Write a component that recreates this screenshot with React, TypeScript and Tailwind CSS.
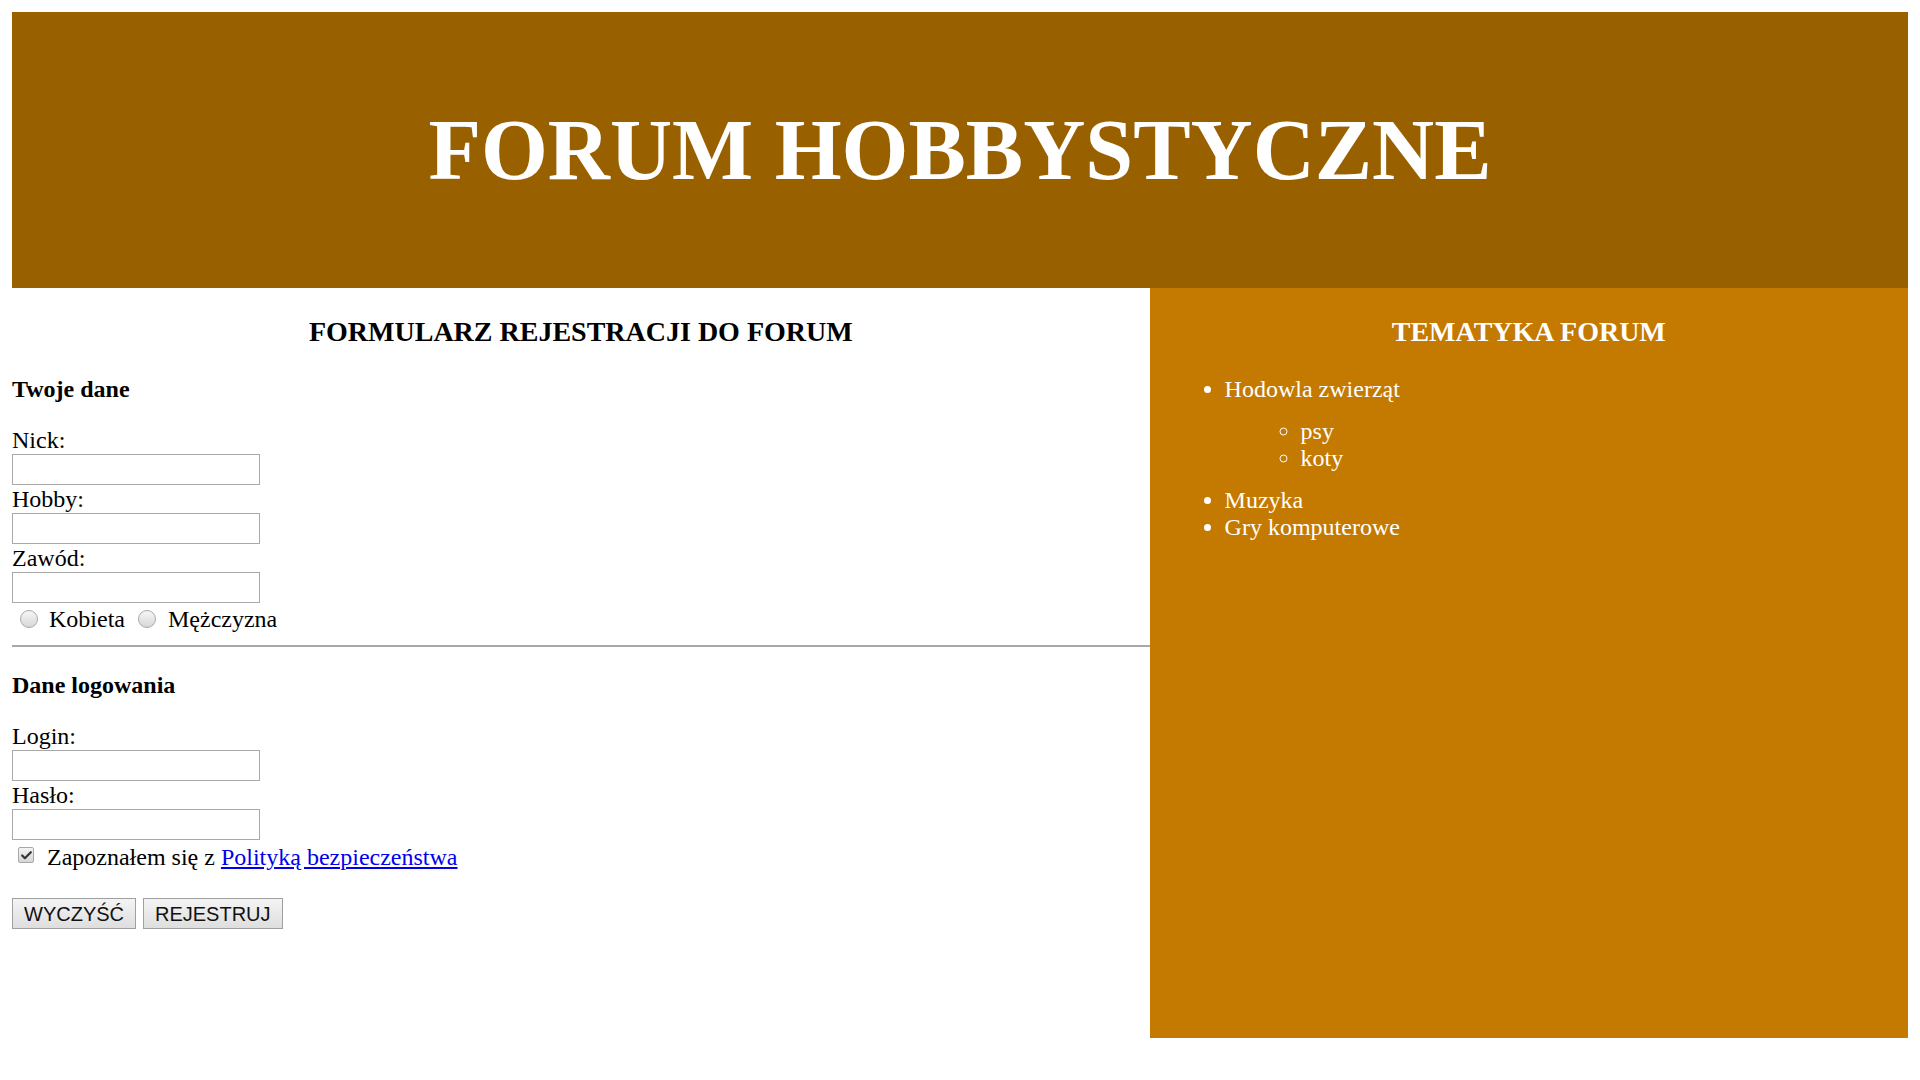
import { Check } from "lucide-react";

const Field = ({ label }: { label: string }) => (
  <>
    <div className="leading-[28px]">{label}</div>
    <input
      type="text"
      className="block w-[248px] h-[31px] border border-[#a9a9a9] bg-white outline-none"
    />
  </>
);

const Radio = ({ className }: { className: string }) => (
  <span
    className={`inline-block w-[18px] h-[18px] rounded-full border border-[#a8a8a8] bg-gradient-to-b from-[#f6f6f6] to-[#d8d8d8] ${className}`}
  />
);

const Topics = () => (
  <ul className="mt-[28px] pl-[75px] list-disc leading-[27px] text-[24px]">
    <li>
      Hodowla zwierząt
      <ul className="my-[15px] pl-[76px] list-[circle]">
        <li>psy</li>
        <li>koty</li>
      </ul>
    </li>
    <li>Muzyka</li>
    <li>Gry komputerowe</li>
  </ul>
);

const App = () => {
  return (
    <div className="min-h-screen bg-white p-[12px] font-['Liberation_Serif',serif] text-[24px] text-black">
      <header className="h-[276px] bg-[#996000] flex items-center justify-center">
        <h1 className="text-[86px] leading-none font-bold text-white">FORUM HOBBYSTYCZNE</h1>
      </header>

      <div className="flex">
        <section className="w-[60%]">
          <h3 className="mt-[28px] text-[28px] leading-[32px] font-bold text-center">
            FORMULARZ REJESTRACJI DO FORUM
          </h3>

          <h4 className="mt-[27px] leading-[28px] font-bold">Twoje dane</h4>
          <div className="mt-[23px]">
            <Field label="Nick:" />
            <Field label="Hobby:" />
            <Field label="Zawód:" />
          </div>
          <div className="mt-[2px] flex items-center leading-[28px]">
            <Radio className="ml-[8px] mr-[11px]" />
            <span>Kobieta</span>
            <Radio className="ml-[13px] mr-[12px]" />
            <span>Mężczyzna</span>
          </div>

          <hr className="mt-[12px] border-0 border-t-2 border-[#a8a8a8]" />

          <h4 className="mt-[24px] leading-[28px] font-bold">Dane logowania</h4>
          <div className="mt-[23px]">
            <Field label="Login:" />
            <Field label="Hasło:" />
          </div>
          <div className="mt-[3px] flex items-center leading-[28px]">
            <span className="ml-[6px] mr-[13px] mb-[4px] w-[16px] h-[16px] rounded-[2px] border border-[#a8a8a8] bg-gradient-to-b from-[#f4f4f4] to-[#d6d6d6] flex items-center justify-center">
              <Check size={13} strokeWidth={4} className="text-[#333]" />
            </span>
            <span>
              Zapoznałem się z{" "}
              <a href="#" className="text-[#0000ee] underline">
                Polityką bezpieczeństwa
              </a>
            </span>
          </div>

          <div className="mt-[27px] flex gap-[7px] font-['Liberation_Sans',Arial,sans-serif] text-[20px]">
            <button className="h-[31px] px-[11px] border border-[#a0a0a0] bg-gradient-to-b from-[#f4f4f4] to-[#dedede] text-[#111] leading-none">
              WYCZYŚĆ
            </button>
            <button className="h-[31px] px-[11px] border border-[#a0a0a0] bg-gradient-to-b from-[#f4f4f4] to-[#dedede] text-[#111] leading-none">
              REJESTRUJ
            </button>
          </div>
        </section>

        <aside className="w-[40%] h-[750px] bg-[#c47a00] text-white">
          <h3 className="mt-[28px] text-[28px] leading-[32px] font-bold text-center">TEMATYKA FORUM</h3>
          <Topics />
        </aside>
      </div>
    </div>
  );
};

export default App;
